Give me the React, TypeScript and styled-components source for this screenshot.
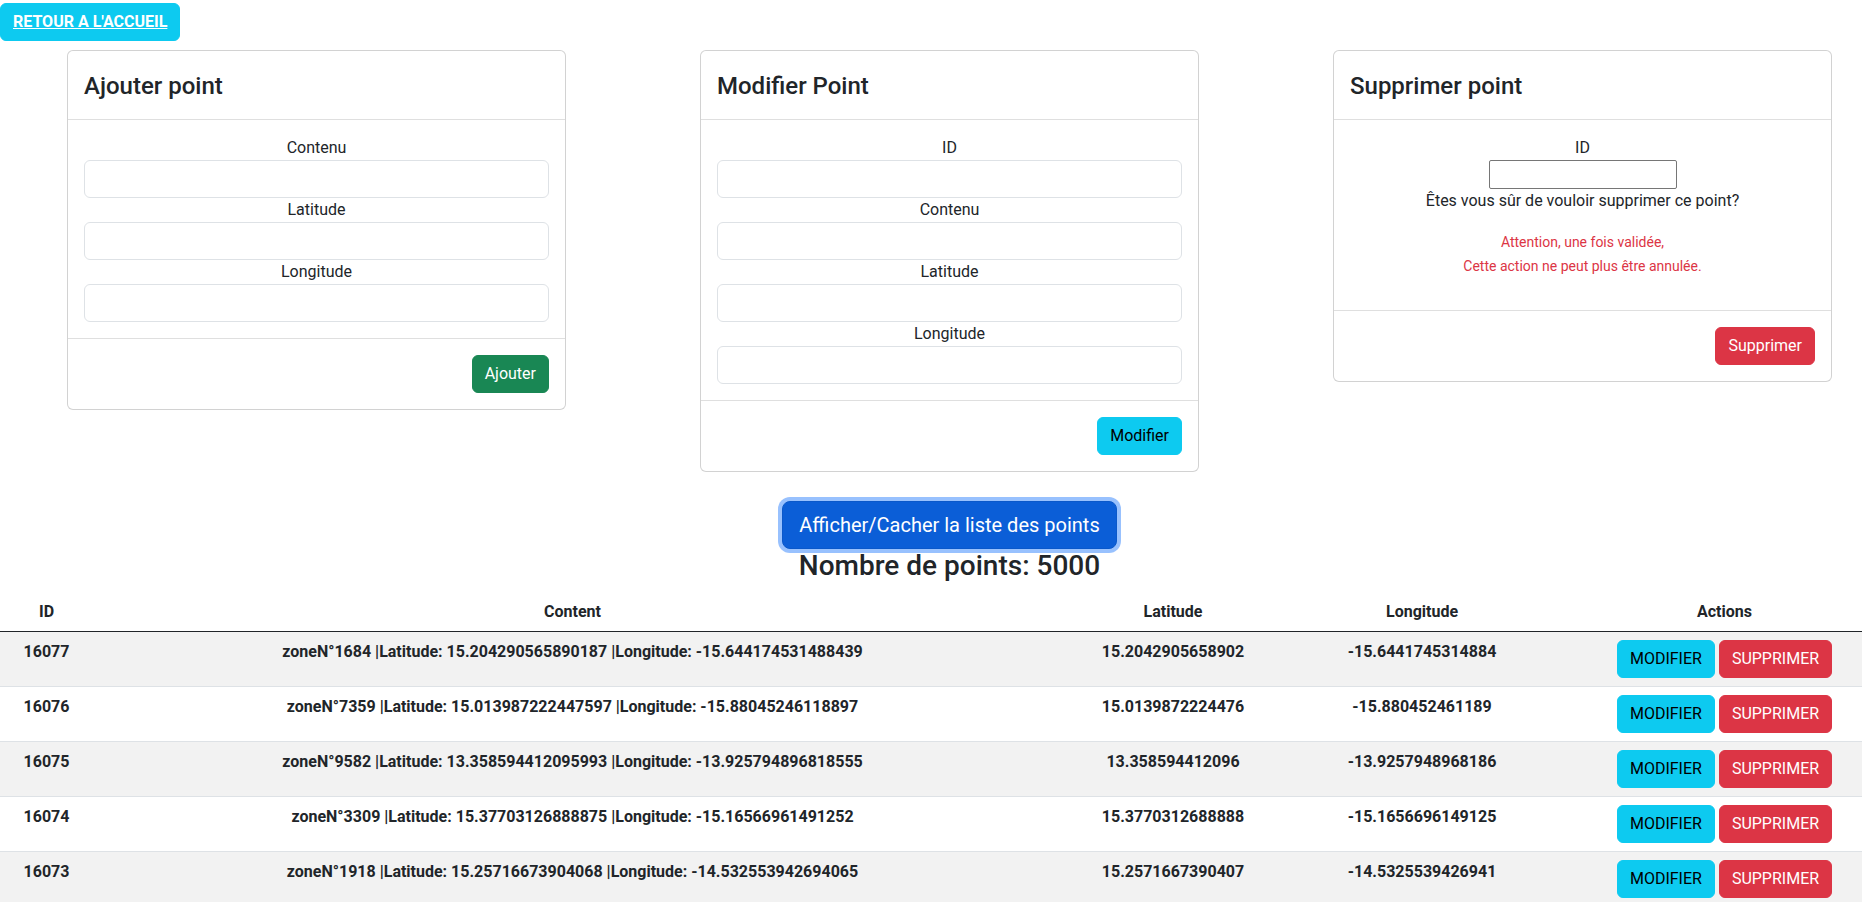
import * as React from 'react';
import styled, { createGlobalStyle, css } from 'styled-components';

type Variant = 'success' | 'info' | 'danger';

type Point = {
  id: number;
  zone: string;
  latFull: string;
  lngFull: string;
  lat: string;
  lng: string;
};

const points: Point[] = [
  { id: 16077, zone: '1684', latFull: '15.204290565890187', lngFull: '-15.644174531488439', lat: '15.2042905658902', lng: '-15.6441745314884' },
  { id: 16076, zone: '7359', latFull: '15.013987222447597', lngFull: '-15.88045246118897', lat: '15.0139872224476', lng: '-15.880452461189' },
  { id: 16075, zone: '9582', latFull: '13.358594412095993', lngFull: '-13.925794896818555', lat: '13.358594412096', lng: '-13.9257948968186' },
  { id: 16074, zone: '3309', latFull: '15.37703126888875', lngFull: '-15.16566961491252', lat: '15.3770312688888', lng: '-15.1656696149125' },
  { id: 16073, zone: '1918', latFull: '15.25716673904068', lngFull: '-14.532553942694065', lat: '15.2571667390407', lng: '-14.5325539426941' },
];

const columns = [
  { label: 'ID', width: 93 },
  { label: 'Content', width: 959 },
  { label: 'Latitude', width: 242 },
  { label: 'Longitude', width: 256 },
  { label: 'Actions', width: 349 },
];

const GlobalStyle = createGlobalStyle`
  *, *::before, *::after {
    box-sizing: border-box;
  }
  html, body {
    margin: 0;
    padding: 0;
    overflow: hidden;
    background: #fff;
  }
  body {
    font-family: Roboto, "Liberation Sans", Arial, sans-serif;
    font-size: 16px;
    line-height: 1.5;
    color: #212529;
  }
`;

const Page = styled.div`
  width: 1899px;
  padding-top: 3px;
`;

const HomeLink = styled.a`
  display: inline-block;
  padding: 6px 12px;
  border: 1px solid #0dcaf0;
  border-radius: 6px;
  background: #0dcaf0;
  color: #fff;
  font-weight: 700;
  line-height: 24px;
  text-decoration: underline;
`;

const CardGrid = styled.div`
  display: grid;
  grid-template-columns: repeat(3, 1fr);
  align-items: start;
  justify-items: center;
  margin-top: 9px;
`;

const Card = styled.section`
  width: 499px;
  background: #fff;
  border: 1px solid rgba(0, 0, 0, 0.175);
  border-radius: 6px;
`;

const CardHeader = styled.header`
  padding: 21px 16px 19px;
  border-bottom: 1px solid rgba(0, 0, 0, 0.125);
`;

const CardTitle = styled.h4`
  margin: 0;
  font-size: 24px;
  font-weight: 500;
  line-height: 28px;
`;

const CardBody = styled.div`
  padding: 16px;
  text-align: center;
`;

const FieldLabel = styled.label`
  display: block;
  line-height: 24px;
`;

const TextInput = styled.input`
  display: block;
  width: 100%;
  height: 38px;
  padding: 6px 12px;
  font: inherit;
  color: #212529;
  background: #fff;
  border: 1px solid #dee2e6;
  border-radius: 6px;
  outline: none;
`;

const PlainInput = styled.input`
  display: block;
  width: 188px;
  height: 29px;
  margin: 0 auto;
  padding: 1px 2px;
  font: inherit;
  border: 1px solid #767676;
  border-radius: 2px;
  outline: none;
`;

const Question = styled.p`
  margin: 0;
  line-height: 24px;
`;

const Warning = styled.p`
  margin: 17px 0 16px;
  color: #dc3545;
  font-size: 14px;
  line-height: 24px;
`;

const CardFooter = styled.footer`
  display: flex;
  justify-content: flex-end;
  padding: 16px;
  border-top: 1px solid rgba(0, 0, 0, 0.125);
`;

const variants = {
  success: css`
    background: #198754;
    border-color: #198754;
    color: #fff;
  `,
  info: css`
    background: #0dcaf0;
    border-color: #0dcaf0;
    color: #000;
  `,
  danger: css`
    background: #dc3545;
    border-color: #dc3545;
    color: #fff;
  `,
};

const Button = styled.button<{ $variant: Variant }>`
  height: 38px;
  padding: 6px 12px;
  font-family: inherit;
  font-size: 16px;
  font-weight: 400;
  line-height: 24px;
  border: 1px solid;
  border-radius: 6px;
  cursor: pointer;
  ${p => variants[p.$variant]}
`;

const ListControls = styled.div`
  display: flex;
  flex-direction: column;
  align-items: center;
  margin-top: 29px;
`;

const ToggleButton = styled.button`
  padding: 8px 16px;
  font-family: inherit;
  font-size: 20px;
  line-height: 30px;
  color: #fff;
  background: #0b5ed7;
  border: 1px solid #0a58ca;
  border-radius: 8px;
  box-shadow: 0 0 0 4px rgba(49, 132, 253, 0.5);
  cursor: pointer;
`;

const Count = styled.h3`
  margin: 0 0 8px;
  font-size: 28px;
  font-weight: 500;
  line-height: 1.2;
`;

const PointsTable = styled.table`
  width: 100%;
  table-layout: fixed;
  border-collapse: separate;
  border-spacing: 0;
  font-weight: 700;
`;

const Col = styled.col<{ $width: number }>`
  width: ${p => p.$width}px;
`;

const HeadCell = styled.th`
  padding: 9px 8px 7px;
  text-align: center;
  line-height: 24px;
  border-bottom: 1px solid #212529;
`;

const Row = styled.tr<{ $striped: boolean }>`
  background: ${p => (p.$striped ? '#f2f2f2' : '#fff')};
`;

const Cell = styled.td`
  padding: 8px;
  text-align: center;
  vertical-align: top;
  line-height: 24px;
  border-bottom: 1px solid #dee2e6;
`;

const ActionGroup = styled.div`
  display: flex;
  justify-content: center;
  gap: 4px;
`;

const Field = ({ label }: { label: string }) => (
  <>
    <FieldLabel>{label}</FieldLabel>
    <TextInput type="text" />
  </>
);

const App: React.FunctionComponent = () => {
  const [showList, setShowList] = React.useState(true);

  return (
    <Page>
      <GlobalStyle />
      <HomeLink href="#">RETOUR A L'ACCUEIL</HomeLink>

      <CardGrid>
        <Card>
          <CardHeader>
            <CardTitle>Ajouter point</CardTitle>
          </CardHeader>
          <CardBody>
            <Field label="Contenu" />
            <Field label="Latitude" />
            <Field label="Longitude" />
          </CardBody>
          <CardFooter>
            <Button $variant="success">Ajouter</Button>
          </CardFooter>
        </Card>

        <Card>
          <CardHeader>
            <CardTitle>Modifier Point</CardTitle>
          </CardHeader>
          <CardBody>
            <Field label="ID" />
            <Field label="Contenu" />
            <Field label="Latitude" />
            <Field label="Longitude" />
          </CardBody>
          <CardFooter>
            <Button $variant="info">Modifier</Button>
          </CardFooter>
        </Card>

        <Card>
          <CardHeader>
            <CardTitle>Supprimer point</CardTitle>
          </CardHeader>
          <CardBody>
            <FieldLabel>ID</FieldLabel>
            <PlainInput type="text" />
            <Question>Êtes vous sûr de vouloir supprimer ce point?</Question>
            <Warning>
              Attention, une fois validée,
              <br />
              Cette action ne peut plus être annulée.
            </Warning>
          </CardBody>
          <CardFooter>
            <Button $variant="danger">Supprimer</Button>
          </CardFooter>
        </Card>
      </CardGrid>

      <ListControls>
        <ToggleButton onClick={() => setShowList(!showList)}>
          Afficher/Cacher la liste des points
        </ToggleButton>
        <Count>Nombre de points: 5000</Count>
      </ListControls>

      {showList && (
        <PointsTable>
          <colgroup>
            {columns.map(c => (
              <Col key={c.label} $width={c.width} />
            ))}
          </colgroup>
          <thead>
            <tr>
              {columns.map(c => (
                <HeadCell key={c.label}>{c.label}</HeadCell>
              ))}
            </tr>
          </thead>
          <tbody>
            {points.map((p, i) => (
              <Row key={p.id} $striped={i % 2 === 0}>
                <Cell>{p.id}</Cell>
                <Cell>
                  zoneN°{p.zone} |Latitude: {p.latFull} |Longitude: {p.lngFull}
                </Cell>
                <Cell>{p.lat}</Cell>
                <Cell>{p.lng}</Cell>
                <Cell>
                  <ActionGroup>
                    <Button $variant="info">MODIFIER</Button>
                    <Button $variant="danger">SUPPRIMER</Button>
                  </ActionGroup>
                </Cell>
              </Row>
            ))}
          </tbody>
        </PointsTable>
      )}
    </Page>
  );
};

export default App;
